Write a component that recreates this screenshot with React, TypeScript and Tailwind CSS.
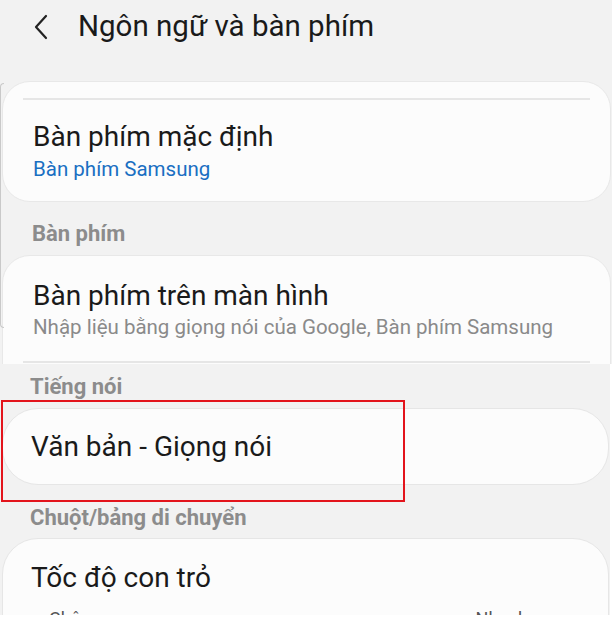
import React from 'react';

const font = { fontFamily: 'Roboto, "Noto Sans", sans-serif' };

const Divider = () => <div className="mx-[20px] h-[2px] bg-[#e6e6e6]" />;

const SectionLabel = ({ children, cls }: { children: React.ReactNode; cls: string }) => (
  <div className={`${cls} flex items-end text-[22px] leading-[26px] font-bold text-[#8c8c8c]`}>{children}</div>
);

export default function App() {
  return (
    <div className="relative w-[614px] h-[625px] overflow-hidden bg-white" style={font}>
      {/* top screenshot */}
      <div className="w-[612px] h-[364px] overflow-hidden bg-[#f2f2f2]">
        <div className="h-[81px] flex items-start pt-[7px]">
          <svg className="ml-[33px] mt-[7px]" width="18" height="26" viewBox="0 0 18 26" fill="none">
            <path d="M13 2 L3 13 L13 24" stroke="#222" strokeWidth="2.2" strokeLinecap="round" strokeLinejoin="round" />
          </svg>
          <h1 className="ml-[27px] text-[29.5px] leading-[38px] text-[#1a1a1a]">Ngôn ngữ và bàn phím</h1>
        </div>

        <div className="ml-[2px] w-[609px] h-[121px] rounded-[28px] bg-[#fcfcfc] border border-[#e8e8e8] pt-[16px]">
          <Divider />
          <div className="pl-[30px] pt-[21px] text-[28px] leading-[32px] text-[#1a1a1a]">Bàn phím mặc định</div>
          <div className="pl-[30px] pt-[2px] text-[20.5px] leading-[28px] text-[#1a6fc2]">Bàn phím Samsung</div>
        </div>

        <SectionLabel cls="h-[53px] pl-[32px] pb-[8px]">Bàn phím</SectionLabel>

        <div className="ml-[2px] w-[609px] h-[140px] rounded-t-[28px] bg-[#fcfcfc] border border-[#e8e8e8] pt-[24px]">
          <div className="pl-[30px] text-[28px] leading-[32px] text-[#1a1a1a]">Bàn phím trên màn hình</div>
          <div className="pl-[30px] pt-[1px] text-[20.5px] leading-[28px] text-[#8a8a8a]">
            Nhập liệu bằng giọng nói của Google, Bàn phím Samsung
          </div>
          <div className="pt-[20px]">
            <Divider />
          </div>
        </div>
      </div>

      {/* bottom screenshot */}
      <div className="w-[610px] h-[251px] overflow-hidden bg-[#f2f2f2]">
        <SectionLabel cls="h-[44px] pl-[30px] pb-[8px]">Tiếng nói</SectionLabel>

        <div className="ml-[2px] w-[607px] h-[77px] rounded-[36px] bg-[#fcfcfc] border border-[#e6e6e6] flex items-center pl-[28px] text-[28px] text-[#1a1a1a]">
          Văn bản - Giọng nói
        </div>

        <SectionLabel cls="h-[53px] pl-[30px] pb-[7px]">Chuột/bảng di chuyển</SectionLabel>

        <div className="ml-[2px] w-[607px] h-[120px] rounded-t-[36px] bg-[#fcfcfc] border border-[#e6e6e6] pt-[22px]">
          <div className="pl-[28px] text-[28px] leading-[34px] text-[#1a1a1a]">Tốc độ con trỏ</div>
          <div className="flex justify-between pl-[46px] pr-[80px] pt-[13px] text-[18px] leading-[22px] text-[#555]">
            <span>Chậm</span>
            <span>Nhanh</span>
          </div>
        </div>
      </div>

      {/* phone edge line */}
      <div className="absolute left-[0px] top-[83px] w-[4px] h-[245px] rounded-l-[6px] border-l border-y border-[#c9c9c9]" />

      {/* highlight box */}
      <div className="absolute left-[1px] top-[400px] w-[404px] h-[102px] border-2 border-[#e3141c]" />
    </div>
  );
}
